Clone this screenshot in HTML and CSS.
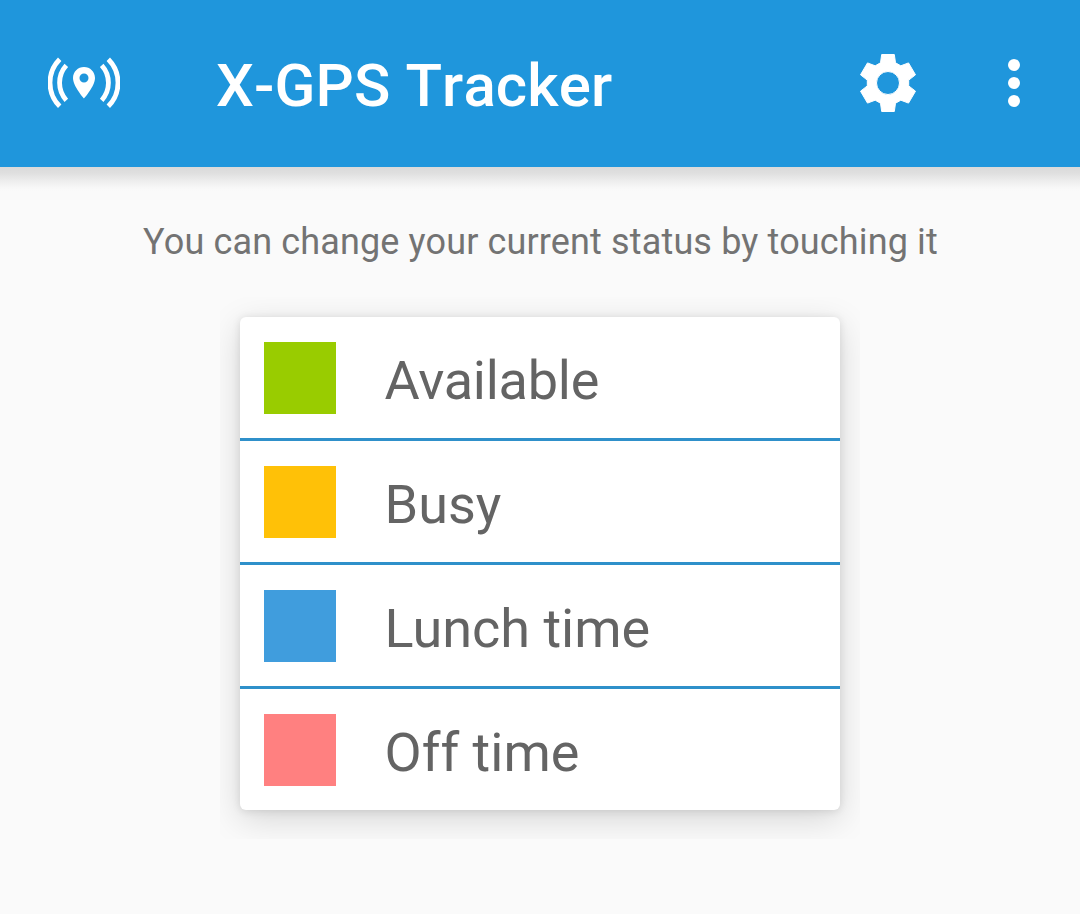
FILE: index.html
```html
<!DOCTYPE html>
<html lang="en">
<head>
<meta charset="utf-8">
<title>X-GPS Tracker</title>
<link rel="stylesheet" href="styles.css">
</head>
<body>
<header class="bar">
  <svg class="logo" width="72" height="72" viewBox="0 0 72 72" fill="none" stroke="#fff" stroke-width="4.800">
    <path d="M11.700 12.200A33.400 33.400 0 0 0 11.700 59.300M18.300 18.400A26 26 0 0 0 18.300 53.300M60.300 12.200A33.400 33.400 0 0 1 60.300 59.300M53.700 18.400A26 26 0 0 1 53.700 53.300"/>
    <path fill="#fff" stroke="none" fill-rule="evenodd" d="M36 20c-6.100 0-11 4.900-11 11 0 8.200 11 20.500 11 20.500S47 39.200 47 31c0-6.100-4.900-11-11-11zm0 15.500a4.500 4.500 0 1 1 0-9 4.500 4.500 0 0 1 0 9z"/>
  </svg>
  <h1 class="title">X-GPS Tracker</h1>
  <svg class="gear" width="72" height="72" viewBox="0 0 72 72" fill="#fff" stroke="#fff" stroke-width="1" stroke-linejoin="round"><path fill-rule="evenodd" d="M29.700 7.500H42.300L43.500 15.800L48.800 18.800L56.500 15.900L63.500 27.800L56.700 33.100V38.900L63.500 44.200L56.500 56.100L48.800 53.200L43.500 56.200L42.300 64.500H29.700L28.500 56.200L23.200 53.200L15.500 56.100L8.500 44.200L15.300 38.900V33.100L8.500 27.800L15.500 15.900L23.200 18.800L28.500 15.800ZM36 24.500a11.500 11.500 0 1 0 0 23 11.500 11.500 0 0 0 0-23z"/></svg>
  <svg class="more" width="72" height="72" viewBox="0 0 72 72" fill="#fff"><circle cx="36" cy="18" r="6"/><circle cx="36" cy="36" r="6"/><circle cx="36" cy="54" r="6"/></svg>
</header>
<div class="bar-shadow"></div>
<main class="content">
  <p class="hint">You can change your current status by touching it</p>
  <div class="card-frame">
    <ul class="card">
      <li class="row"><span class="swatch available"></span><span class="label tight">Available</span></li>
      <li class="row"><span class="swatch busy"></span><span class="label">Busy</span></li>
      <li class="row"><span class="swatch lunch"></span><span class="label">Lunch time</span></li>
      <li class="row"><span class="swatch off"></span><span class="label">Off time</span></li>
    </ul>
  </div>
</main>
</body>
</html>
```
FILE: styles.css
```css
body { margin: 0; height: 914px; overflow: hidden; background: #fafafa; font-family: Roboto, sans-serif; }
.bar { display: flex; align-items: center; box-sizing: border-box; height: 167px; padding: 0 30px 1px 48px; background: #1f96dc; }
.bar-shadow { height: 24px; background: linear-gradient(#dadada, #dfdfdf 25%, #eee 60%, #f7f7f7 85%, #fafafa); }
.logo { flex: none; }
.title { margin: 6px 0 0 96px; flex: 1; color: #fff; font-size: 60px; line-height: 70px; font-weight: 500; font-kerning: none; letter-spacing: .12px; white-space: nowrap; }
.gear { flex: none; margin-right: 54px; }
.more { flex: none; }
.content { display: flex; flex-direction: column; align-items: center; }
.hint { margin: 30px 0 0 1px; color: #737373; font-size: 36px; line-height: 42px; letter-spacing: .14px; white-space: nowrap; }
.card-frame { margin-top: 34px; padding: 20px 20px 29px; overflow: hidden; }
.card { list-style: none; margin: 0; padding: 0; width: 600px; overflow: hidden; border-radius: 6px; background: #fff; box-shadow: 0 9px 34px rgba(0,0,0,.15), 0 1px 8px rgba(0,0,0,.11); }
.row { display: flex; align-items: center; box-sizing: border-box; height: 124px; padding: 0 24px; border-bottom: 3px solid #2f90ca; }
.row:last-child { height: 121px; border-bottom: 0; }
.swatch { width: 72px; height: 72px; margin: 0 48.500px 0 0; }
.available { background: #9c0; }
.busy { background: #ffc107; }
.lunch { background: #409ddd; }
.off { background: #ff8080; }
.label { margin-top: 7px; color: #646464; font-size: 54px; line-height: 64px; white-space: nowrap; }
.tight { letter-spacing: -.25px; }
```
